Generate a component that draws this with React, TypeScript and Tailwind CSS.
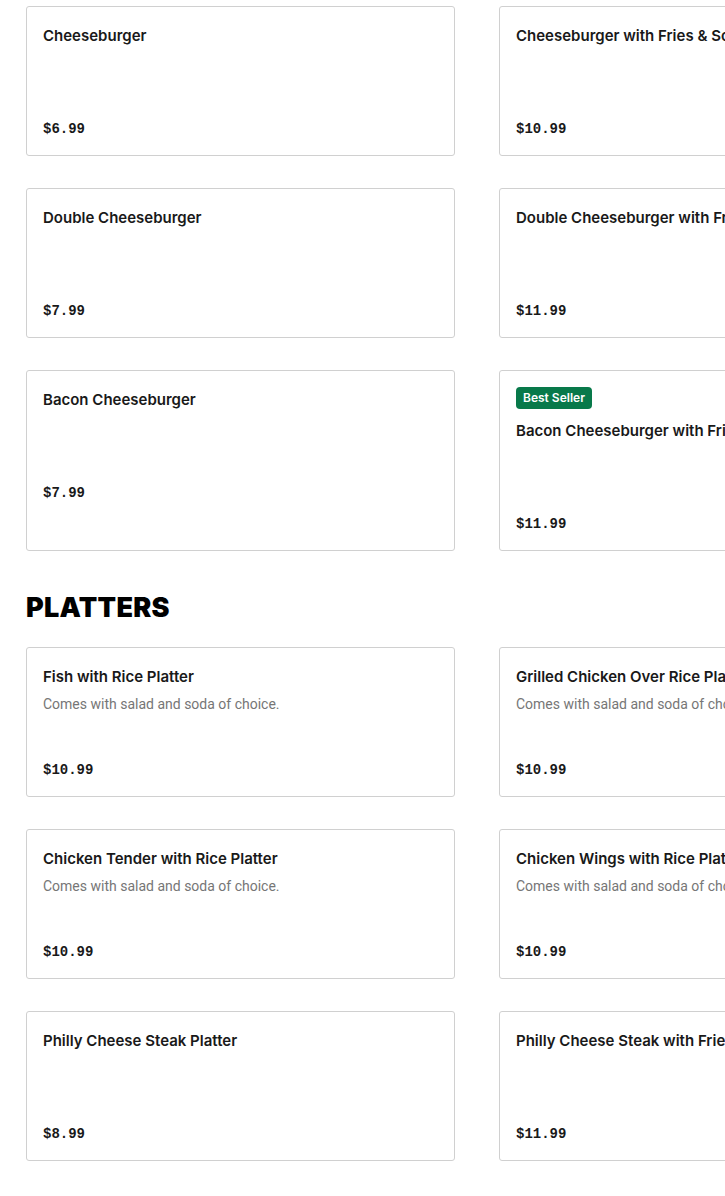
import React from "react";

type Item = { name: string; price: string; desc?: string; badge?: string };

const burgers: Item[] = [
  { name: "Cheeseburger", price: "$6.99" },
  { name: "Cheeseburger with Fries & Soda", price: "$10.99" },
  { name: "Double Cheeseburger", price: "$7.99" },
  { name: "Double Cheeseburger with Fries & Soda", price: "$11.99" },
  { name: "Bacon Cheeseburger", price: "$7.99" },
  { name: "Bacon Cheeseburger with Fries & Soda", price: "$11.99", badge: "Best Seller" },
];

const platters: Item[] = [
  { name: "Fish with Rice Platter", price: "$10.99", desc: "Comes with salad and soda of choice." },
  { name: "Grilled Chicken Over Rice Platter", price: "$10.99", desc: "Comes with salad and soda of choice." },
  { name: "Chicken Tender with Rice Platter", price: "$10.99", desc: "Comes with salad and soda of choice." },
  { name: "Chicken Wings with Rice Platter", price: "$10.99", desc: "Comes with salad and soda of choice." },
  { name: "Philly Cheese Steak Platter", price: "$8.99" },
  { name: "Philly Cheese Steak with Fries & Soda", price: "$11.99" },
];

function Card({ item }: { item: Item }) {
  return (
    <div className="flex flex-col border border-[#d0d0d0] rounded-[3px] bg-white p-4 overflow-hidden">
      {item.badge && (
        <div className="mb-[9px] flex">
          <span
            className="flex h-[22px] items-center rounded-[4px] bg-[#08794a] px-[7px] text-[12px] leading-none font-semibold text-white"
            style={{ fontFamily: 'Inter, "Noto Sans", sans-serif' }}
          >
            {item.badge}
          </span>
        </div>
      )}
      <div
        className="pt-px text-[15px] leading-6 font-semibold text-[#191919] whitespace-nowrap"
        style={{ fontFamily: 'Inter, "Noto Sans", sans-serif' }}
      >
        {item.name}
      </div>
      <div className="h-[71px]">
        {item.desc && (
          <div className="mt-[5px] text-[14px] leading-5 text-[#767676] whitespace-nowrap">{item.desc}</div>
        )}
      </div>
      <div
        className="text-[14px] leading-5 font-bold text-[#191919]"
        style={{ fontFamily: '"Liberation Mono", "DejaVu Sans Mono", monospace' }}
      >
        {item.price}
      </div>
    </div>
  );
}

export default function App() {
  return (
    <div
      className="w-full overflow-hidden bg-white pt-[6px] pb-[36px]"
      style={{ fontFamily: 'Roboto, "Noto Sans", sans-serif' }}
    >
      <div className="pl-[26px] w-[960px]">
        <div className="grid grid-cols-[429px_429px] gap-x-[44px] gap-y-[32px]">
          {burgers.map((b) => (
            <Card key={b.name} item={b} />
          ))}
        </div>
        <h2
          className="mt-[41px] mb-[23px] text-[27px] leading-8 font-black tracking-[0.01em] text-black"
          style={{ fontFamily: 'Inter, "Noto Sans", sans-serif' }}
        >
          PLATTERS
        </h2>
        <div className="grid grid-cols-[429px_429px] gap-x-[44px] gap-y-[32px]">
          {platters.map((b) => (
            <Card key={b.name} item={b} />
          ))}
        </div>
      </div>
    </div>
  );
}
